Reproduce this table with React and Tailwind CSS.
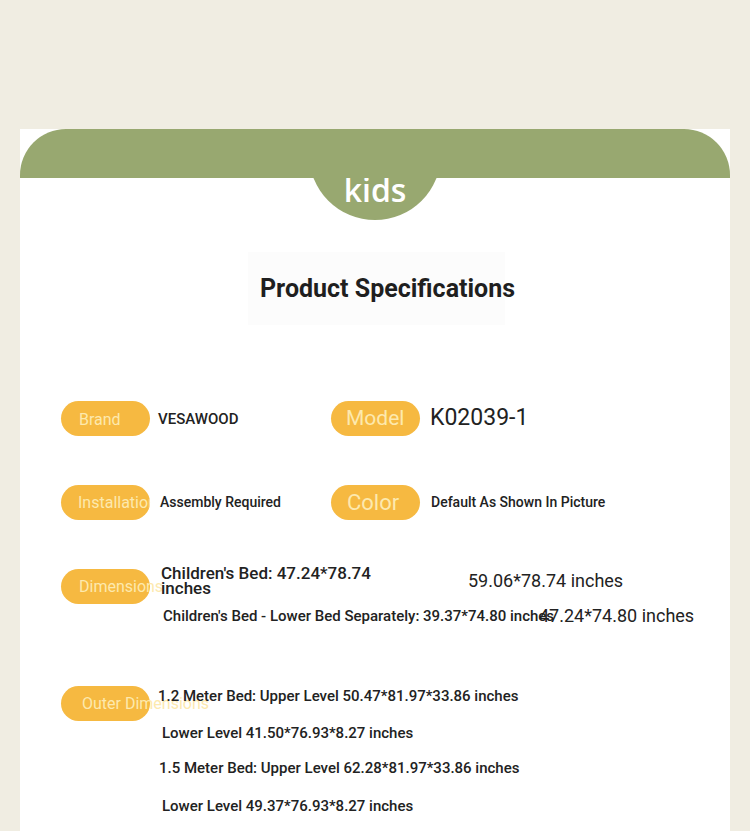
import React from "react";

const roboto = { fontFamily: "Roboto, 'Liberation Sans', sans-serif" };

// orange label pill; padding and text size vary per label in the source
function Tag({ children, className = "" }) {
  return (
    <div
      className={`flex h-[35px] w-[89px] shrink-0 items-center whitespace-nowrap rounded-full bg-[#f6b941] text-[#fde9ae] ${className}`}
    >
      {children}
    </div>
  );
}

export default function App() {
  return (
    <div
      className="flex h-[831px] flex-col overflow-hidden bg-[#f0ede2] text-[#222222]"
      style={roboto}
    >
      <div className="mx-[20px] mt-[129px] flex flex-1 flex-col bg-white">
        {/* green header band with the hanging "kids" badge */}
        <div className="h-[49px] rounded-t-[46px] bg-[#98a870]" />
        <div className="flex h-[42px] justify-center overflow-hidden">
          <div className="-mt-[90px] flex h-[132px] w-[132px] shrink-0 items-end justify-center rounded-full bg-[#98a870] pb-[14px]">
            <span className="font-['Open_Sans',sans-serif] text-[32px] font-semibold leading-none text-white">
              kids
            </span>
          </div>
        </div>

        {/* title */}
        <div className="ml-[228px] mt-[32px] flex h-[73px] w-[257px] items-center bg-[#fcfcfc] pl-[12px]">
          <h1 className="whitespace-nowrap text-[25px] font-bold leading-none text-[#1f1f1f]">
            Product Specifications
          </h1>
        </div>

        {/* brand / model */}
        <div className="mt-[76px] flex items-center pl-[41px]">
          <Tag className="pl-[18px] pt-[2px] text-[16px]">Brand</Tag>
          <p className="ml-[8px] mt-[2px] w-[173px] text-[15px] font-medium">VESAWOOD</p>
          <Tag className="pl-[15px] text-[21px]">Model</Tag>
          <p className="ml-[10px] text-[23px] font-normal">K02039-1</p>
        </div>

        {/* installation / color */}
        <div className="mt-[49px] flex items-center pl-[41px]">
          <Tag className="overflow-hidden pl-[17px] text-[16px]">Installation</Tag>
          <p className="ml-[10px] w-[171px] text-[14px] font-medium">Assembly Required</p>
          <Tag className="pl-[16px] text-[22px]">Color</Tag>
          <p className="ml-[11px] text-[14px] font-medium">Default As Shown In Picture</p>
        </div>

        {/* dimensions */}
        <div className="mt-[46px] flex items-start pl-[41px]">
          <Tag className="mt-[3px] pl-[18px] text-[16px]">Dimensions</Tag>
          <div className="flex flex-col">
            <div className="flex items-center">
              <p className="ml-[11px] w-[257px] text-[17px] font-medium leading-[15px]">
                Children's Bed: 47.24*78.74 inches
              </p>
              <p className="ml-[50px] whitespace-nowrap text-[18px] leading-[20px]">
                59.06*78.74 inches
              </p>
            </div>
            <div className="mt-[10px] flex items-center">
              <p className="ml-[13px] w-[376px] whitespace-nowrap text-[15px] font-medium leading-[20px]">
                Children's Bed - Lower Bed Separately: 39.37*74.80 inches
              </p>
              <p className="whitespace-nowrap text-[18px] leading-[20px]">47.24*74.80 inches</p>
            </div>
          </div>
        </div>

        {/* outer dimensions */}
        <div className="mt-[60px] flex items-start pl-[41px]">
          <Tag className="pl-[21px] text-[16px]">Outer Dimensions</Tag>
          <div className="flex flex-col whitespace-nowrap text-[15px] font-medium leading-[20px]">
            <p className="ml-[8px]">1.2 Meter Bed: Upper Level 50.47*81.97*33.86 inches</p>
            <p className="ml-[12px] mt-[17px]">Lower Level 41.50*76.93*8.27 inches</p>
            <p className="ml-[9px] mt-[15px]">1.5 Meter Bed: Upper Level 62.28*81.97*33.86 inches</p>
            <p className="ml-[12px] mt-[18px]">Lower Level 49.37*76.93*8.27 inches</p>
          </div>
        </div>
      </div>
    </div>
  );
}
